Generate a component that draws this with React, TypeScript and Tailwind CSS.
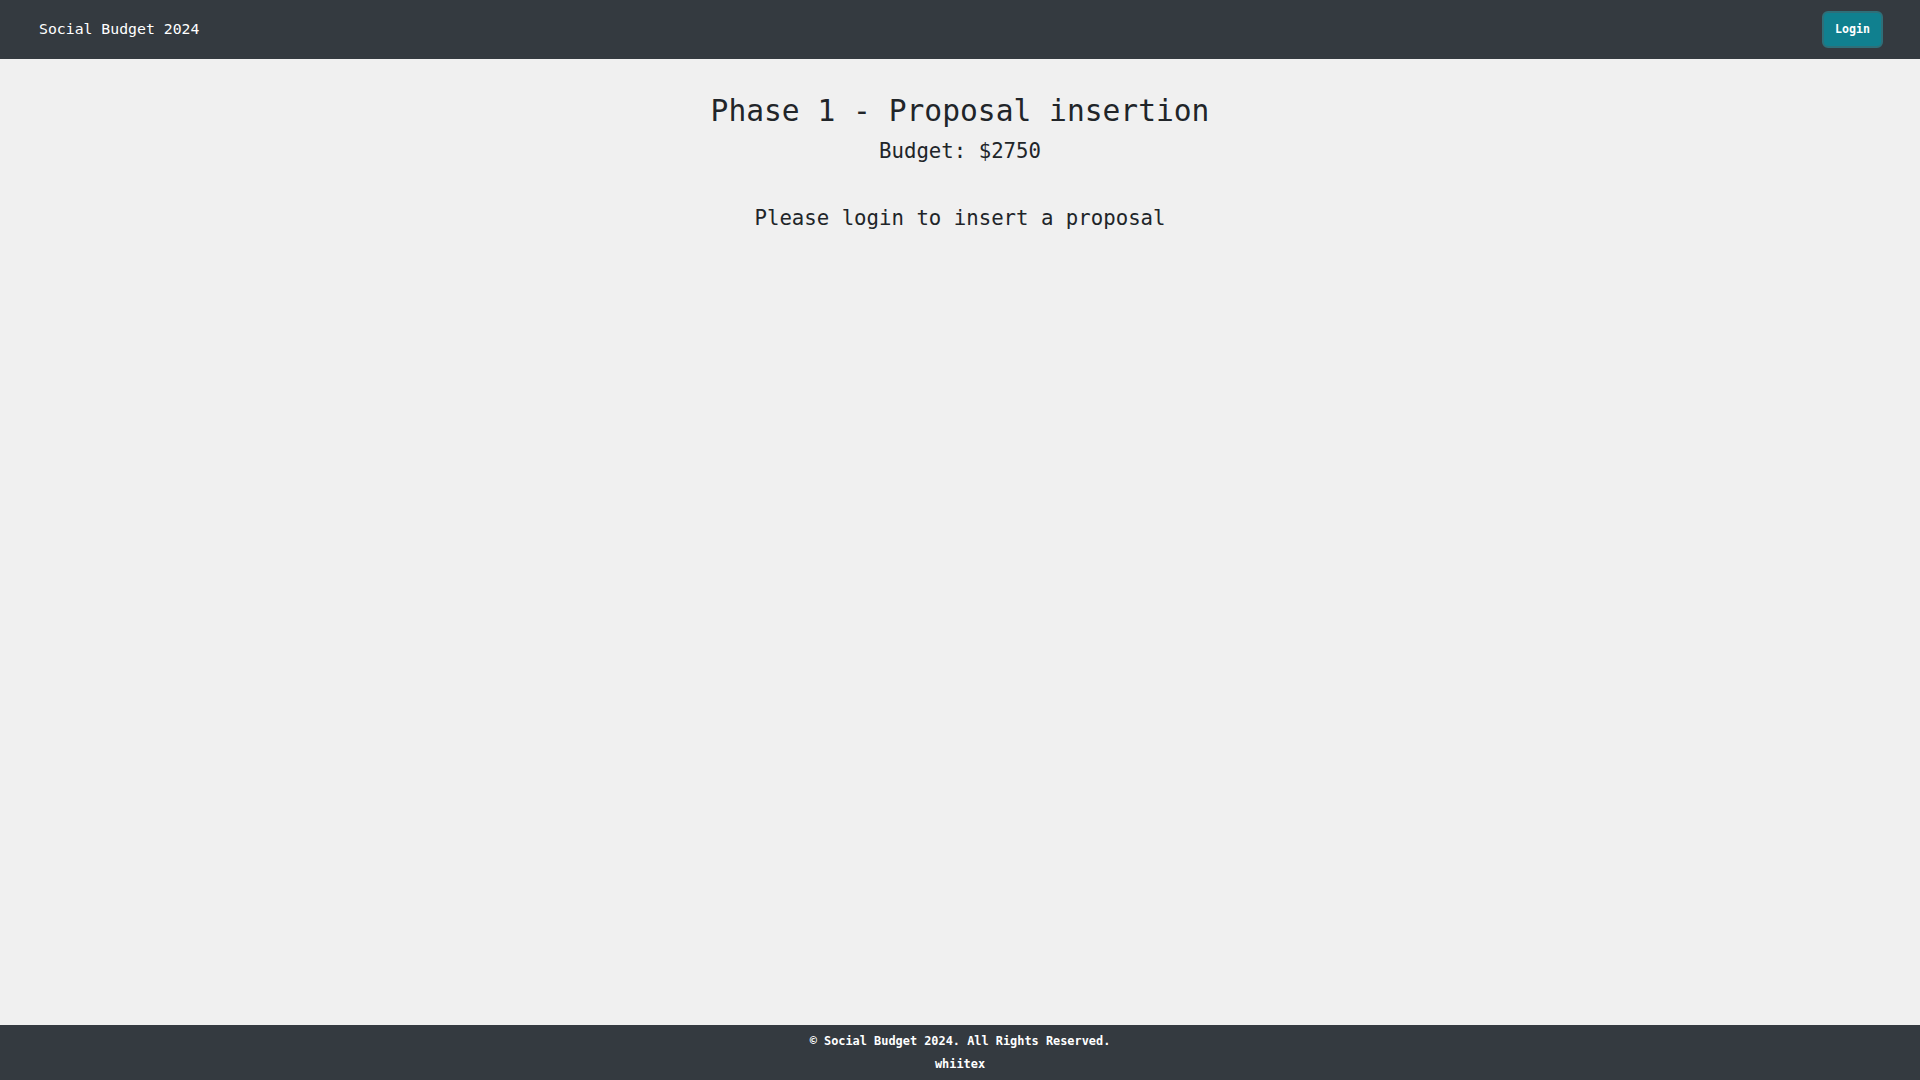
const App = () => {
  return (
    <div
      className="min-h-screen flex flex-col bg-[#f0f0f0] text-[#212529]"
      style={{ fontFamily: '"DejaVu Sans Mono", "Liberation Mono", monospace' }}
    >
      {/* navbar */}
      <nav className="h-[59px] bg-[#343a40] flex items-center justify-between pl-[39px] pr-[37px]">
        <span className="text-white text-[14.8px]">Social Budget 2024</span>
        <button className="h-[37px] w-[61px] rounded-md bg-[#10808f] border-2 border-[#2e6f79] text-white text-[11.6px] font-bold">
          Login
        </button>
      </nav>

      <main className="flex-1 flex flex-col items-center pt-[34px]">
        <h2 className="text-[29.6px] leading-[36px]">Phase 1 - Proposal insertion</h2>
        <h5 className="text-[20.7px] leading-[24px] mt-[10px]">Budget: $2750</h5>
        <p className="text-[20.7px] leading-[24px] mt-[43px]">Please login to insert a proposal</p>
      </main>

      <footer className="h-[55px] bg-[#343a40] text-white flex flex-col items-center justify-center gap-[6px] text-[11.9px] font-bold leading-[17px]">
        <span>© Social Budget 2024. All Rights Reserved.</span>
        <span>whiitex</span>
      </footer>
    </div>
  );
};

export default App;
